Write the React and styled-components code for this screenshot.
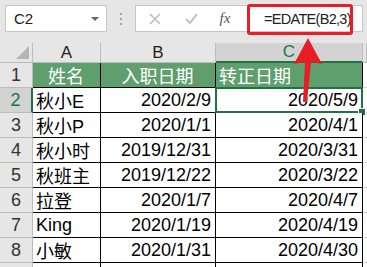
import React from 'react';
import styled, { createGlobalStyle } from 'styled-components';

const GlobalStyle = createGlobalStyle`
  html, body {
    margin: 0;
    padding: 0;
    background: #e6e6e6;
  }
  * {
    box-sizing: border-box;
  }
`;

const FONT = '"Liberation Sans", "Noto Sans CJK SC", sans-serif';

const Page = styled.div`
  position: relative;
  width: 367px;
  height: 267px;
  overflow: hidden;
  background: #e6e6e6;
  font-family: ${FONT};
`;

const FormulaBar = styled.div`
  display: flex;
  align-items: center;
  height: 43px;
  padding: 0 4px 6px 5px;
`;

const NameBox = styled.div`
  display: flex;
  align-items: center;
  justify-content: space-between;
  width: 102px;
  height: 27px;
  padding: 0 7px 0 8px;
  background: #fff;
  border: 1px solid #c6c6c6;
  font-size: 15px;
  color: #222;
`;

const Caret = styled.span`
  width: 0;
  height: 0;
  border-left: 4px solid transparent;
  border-right: 4px solid transparent;
  border-top: 4px solid #666;
`;

const Grip = styled.div`
  display: flex;
  flex-direction: column;
  gap: 3px;
  margin: 0 13px 0 13px;
  span {
    width: 2px;
    height: 2px;
    background: #a6a6a6;
  }
`;

const FormulaBox = styled.div`
  flex: 1;
  display: flex;
  align-items: center;
  height: 27px;
  background: #fff;
  border: 1px solid #c6c6c6;
`;

const IconSlot = styled.div`
  display: flex;
  align-items: center;
  justify-content: center;
  width: ${(p) => p.$w}px;
  height: 100%;
  color: #bdbdbd;
`;

const Fx = styled.span`
  font-family: "Liberation Serif", serif;
  font-style: italic;
  font-size: 15px;
  color: #555;
`;

const FormulaText = styled.div`
  padding-left: 22px;
  font-size: 14.5px;
  letter-spacing: -0.7px;
  color: #222;
`;

const Sheet = styled.div`
  display: grid;
  grid-template-columns: 33px 68px 115px 147px 1fr;
  grid-template-rows: 20px repeat(9, 25px);
`;

const Corner = styled.div`
  position: relative;
  background: #e6e6e6;
  border-right: 1px solid #bcbcbc;
  border-bottom: 1px solid #bcbcbc;
  &::after {
    content: '';
    position: absolute;
    right: 3px;
    bottom: 3px;
    width: 0;
    height: 0;
    border-left: 13px solid transparent;
    border-bottom: 13px solid #b5b5b5;
  }
`;

const ColHead = styled.div`
  display: flex;
  align-items: center;
  justify-content: center;
  background: ${(p) => (p.$active ? '#d3d3d3' : '#e6e6e6')};
  border-right: 1px solid #bcbcbc;
  border-bottom: ${(p) => (p.$active ? '2px solid #217346' : '1px solid #bcbcbc')};
  color: ${(p) => (p.$active ? '#217346' : '#222')};
  font-size: 17px;
`;

const RowHead = styled.div`
  display: flex;
  align-items: center;
  justify-content: center;
  background: ${(p) => (p.$active ? '#d3d3d3' : '#e6e6e6')};
  border-right: ${(p) => (p.$active ? '2px solid #217346' : '1px solid #bcbcbc')};
  border-bottom: 1px solid #bcbcbc;
  color: ${(p) => (p.$active ? '#217346' : '#333')};
  font-size: 18px;
`;

const Cell = styled.div`
  position: relative;
  display: flex;
  align-items: center;
  justify-content: ${(p) => p.$align || 'flex-start'};
  padding: 0 4px 0 3px;
  background: ${(p) => (p.$head ? '#5f9f6e' : '#fff')};
  color: ${(p) => (p.$head ? '#fff' : '#000')};
  border-right: 1px solid #000;
  border-bottom: 1px solid #000;
  font-size: 18px;
  white-space: nowrap;
`;

const EdgeCell = styled.div`
  background: #fff;
  border-bottom: 1px solid #d4d4d4;
`;

const Selection = styled.div`
  position: absolute;
  left: -1px;
  top: -1px;
  right: -1px;
  bottom: -1px;
  border: 2px solid #217346;
  &::after {
    content: '';
    position: absolute;
    right: -5px;
    bottom: -5px;
    width: 6px;
    height: 6px;
    background: #217346;
    border: 1px solid #fff;
  }
`;

const RedFrame = styled.div`
  position: absolute;
  left: 247px;
  top: 4px;
  width: 106px;
  height: 31px;
  border: 3px solid #e81d25;
  border-radius: 3px;
`;

const Arrow = styled.svg`
  position: absolute;
  left: 290px;
  top: 36px;
`;

const rows = [
  ['秋小E', '2020/2/9', '2020/5/9'],
  ['秋小P', '2020/1/1', '2020/4/1'],
  ['秋小时', '2019/12/31', '2020/3/31'],
  ['秋班主', '2019/12/22', '2020/3/22'],
  ['拉登', '2020/1/7', '2020/4/7'],
  ['King', '2020/1/19', '2020/4/19'],
  ['小敏', '2020/1/31', '2020/4/30'],
];

export default function App() {
  return (
    <Page>
      <GlobalStyle />
      <FormulaBar>
        <NameBox>
          C2
          <Caret />
        </NameBox>
        <Grip>
          <span />
          <span />
          <span />
        </Grip>
        <FormulaBox>
          <IconSlot $w={38}>
            <svg width="12" height="12" viewBox="0 0 12 12">
              <path d="M1 1 L11 11 M11 1 L1 11" stroke="#bdbdbd" strokeWidth="1.6" fill="none" />
            </svg>
          </IconSlot>
          <IconSlot $w={34}>
            <svg width="13" height="11" viewBox="0 0 13 11">
              <path d="M1 6 L5 10 L12 1" stroke="#bdbdbd" strokeWidth="1.8" fill="none" />
            </svg>
          </IconSlot>
          <IconSlot $w={34}>
            <Fx>fx</Fx>
          </IconSlot>
          <FormulaText>=EDATE(B2,3)</FormulaText>
        </FormulaBox>
      </FormulaBar>

      <Sheet>
        <Corner />
        <ColHead>A</ColHead>
        <ColHead>B</ColHead>
        <ColHead $active>C</ColHead>
        <ColHead />

        <RowHead>1</RowHead>
        <Cell $head $align="center">姓名</Cell>
        <Cell $head $align="center">入职日期</Cell>
        <Cell $head>转正日期</Cell>
        <EdgeCell />

        {rows.map((r, i) => (
          <React.Fragment key={i}>
            <RowHead $active={i === 0}>{i + 2}</RowHead>
            <Cell>{r[0]}</Cell>
            <Cell $align="flex-end">{r[1]}</Cell>
            <Cell $align="flex-end">
              {r[2]}
              {i === 0 && <Selection />}
            </Cell>
            <EdgeCell />
          </React.Fragment>
        ))}

        <RowHead />
        <Cell />
        <Cell />
        <Cell />
        <EdgeCell />
      </Sheet>

      <RedFrame />
      <Arrow width="34" height="70" viewBox="0 0 34 70">
        <path d="M18 2 L32 28 L21 26 L17 66 L13 66 L15 26 L4 28 Z" fill="#e81d25" />
      </Arrow>
    </Page>
  );
}
